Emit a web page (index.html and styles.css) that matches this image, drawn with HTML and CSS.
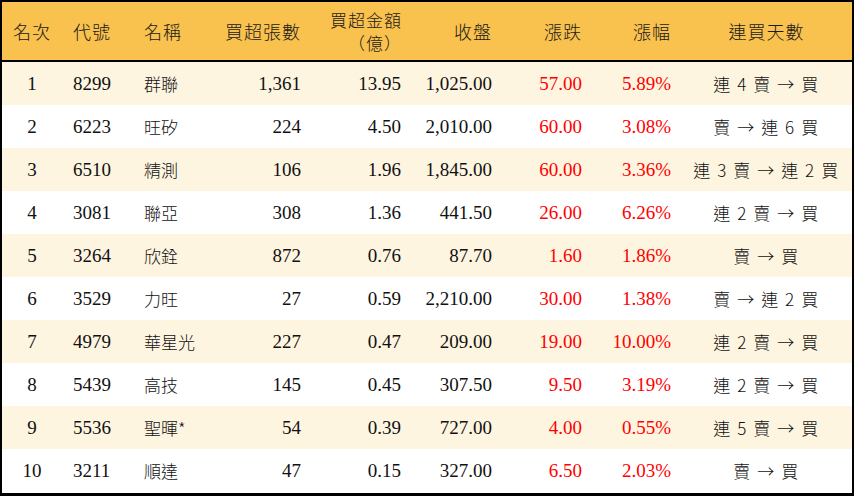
FILE: index.html
```html
<!DOCTYPE html>
<html lang="zh-Hant">
<head>
<meta charset="utf-8">
<title>買超排行</title>
<link rel="stylesheet" href="styles.css">
</head>
<body>
<div class="frame">
<table class="rank">
<colgroup>
<col class="c1"><col class="c2"><col class="c3"><col class="c4"><col class="c5"><col class="c6"><col class="c7"><col class="c8"><col class="c9">
</colgroup>
<thead>
<tr>
<th class="ctr">名次</th>
<th class="lft">代號</th>
<th class="lft">名稱</th>
<th class="rgt">買超張數</th>
<th class="rgt two"><span class="ln">買超金額</span><span class="ln">（億）</span></th>
<th class="rgt">收盤</th>
<th class="rgt">漲跌</th>
<th class="rgt">漲幅</th>
<th class="ctr">連買天數</th>
</tr>
</thead>
<tbody>
<tr class="odd"><td class="ctr">1</td><td class="lft">8299</td><td class="lft cjk">群聯</td><td class="rgt">1,361</td><td class="rgt">13.95</td><td class="rgt">1,025.00</td><td class="rgt up">57.00</td><td class="rgt up">5.89%</td><td class="ctr cjk days">連 4 賣 → 買</td></tr>
<tr><td class="ctr">2</td><td class="lft">6223</td><td class="lft cjk">旺矽</td><td class="rgt">224</td><td class="rgt">4.50</td><td class="rgt">2,010.00</td><td class="rgt up">60.00</td><td class="rgt up">3.08%</td><td class="ctr cjk days">賣 → 連 6 買</td></tr>
<tr class="odd"><td class="ctr">3</td><td class="lft">6510</td><td class="lft cjk">精測</td><td class="rgt">106</td><td class="rgt">1.96</td><td class="rgt">1,845.00</td><td class="rgt up">60.00</td><td class="rgt up">3.36%</td><td class="ctr cjk days">連 3 賣 → 連 2 買</td></tr>
<tr><td class="ctr">4</td><td class="lft">3081</td><td class="lft cjk">聯亞</td><td class="rgt">308</td><td class="rgt">1.36</td><td class="rgt">441.50</td><td class="rgt up">26.00</td><td class="rgt up">6.26%</td><td class="ctr cjk days">連 2 賣 → 買</td></tr>
<tr class="odd"><td class="ctr">5</td><td class="lft">3264</td><td class="lft cjk">欣銓</td><td class="rgt">872</td><td class="rgt">0.76</td><td class="rgt">87.70</td><td class="rgt up">1.60</td><td class="rgt up">1.86%</td><td class="ctr cjk days">賣 → 買</td></tr>
<tr><td class="ctr">6</td><td class="lft">3529</td><td class="lft cjk">力旺</td><td class="rgt">27</td><td class="rgt">0.59</td><td class="rgt">2,210.00</td><td class="rgt up">30.00</td><td class="rgt up">1.38%</td><td class="ctr cjk days">賣 → 連 2 買</td></tr>
<tr class="odd"><td class="ctr">7</td><td class="lft">4979</td><td class="lft cjk">華星光</td><td class="rgt">227</td><td class="rgt">0.47</td><td class="rgt">209.00</td><td class="rgt up">19.00</td><td class="rgt up">10.00%</td><td class="ctr cjk days">連 2 賣 → 買</td></tr>
<tr><td class="ctr">8</td><td class="lft">5439</td><td class="lft cjk">高技</td><td class="rgt">145</td><td class="rgt">0.45</td><td class="rgt">307.50</td><td class="rgt up">9.50</td><td class="rgt up">3.19%</td><td class="ctr cjk days">連 2 賣 → 買</td></tr>
<tr class="odd"><td class="ctr">9</td><td class="lft">5536</td><td class="lft cjk">聖暉*</td><td class="rgt">54</td><td class="rgt">0.39</td><td class="rgt">727.00</td><td class="rgt up">4.00</td><td class="rgt up">0.55%</td><td class="ctr cjk days">連 5 賣 → 買</td></tr>
<tr><td class="ctr">10</td><td class="lft">3211</td><td class="lft cjk">順達</td><td class="rgt">47</td><td class="rgt">0.15</td><td class="rgt">327.00</td><td class="rgt up">6.50</td><td class="rgt up">2.03%</td><td class="ctr cjk days">賣 → 買</td></tr>
</tbody>
</table>
</div>
</body>
</html>
```

FILE: styles.css
```css
html, body {
  margin: 0;
  padding: 0;
  background: #ffffff;
}
.frame {
  width: 854px;
  height: 496px;
  box-sizing: border-box;
  border: 2px solid #000;
  border-bottom-width: 3px;
  overflow: hidden;
}
.rank {
  width: 850px;
  border-collapse: collapse;
  table-layout: fixed;
  font-family: "Liberation Serif", "Noto Sans CJK TC", serif;
  font-size: 19px;
  color: #111;
}
.c1 { width: 60px; }
.c2 { width: 71px; }
.c3 { width: 72px; }
.c4 { width: 106px; }
.c5 { width: 100px; }
.c6 { width: 91px; }
.c7 { width: 90px; }
.c8 { width: 89px; }
.c9 { width: 171px; }
.rank thead tr {
  background: #f9c14d;
}
.rank th {
  height: 59px;
  padding: 0 10px;
  font-family: "Noto Sans CJK TC", serif;
  font-weight: 300;
  font-size: 18px;
  letter-spacing: 1px;
  border-bottom: 2px solid #000;
  line-height: 22px;
  color: #1a1a1a;
  box-sizing: border-box;
}
.rank th.two {
  font-size: 17px;
  padding-right: 9px;
}
.ln {
  display: block;
  height: 23px;
  line-height: 23px;
}
.rank td {
  height: 43px;
  padding: 0 10px;
  line-height: 20px;
  white-space: nowrap;
}
.rank tbody tr {
  background: #ffffff;
}
.rank tbody tr.odd {
  background: #fef5e1;
}
.ctr { text-align: center; }
.lft { text-align: left; padding-left: 11px !important; }
.rgt { text-align: right; }
.cjk {
  font-family: "Noto Sans CJK TC", serif;
  font-weight: 300;
  font-size: 17px;
}
.days {
  letter-spacing: 1.6px;
}
.up { color: #ff0000; }
```
